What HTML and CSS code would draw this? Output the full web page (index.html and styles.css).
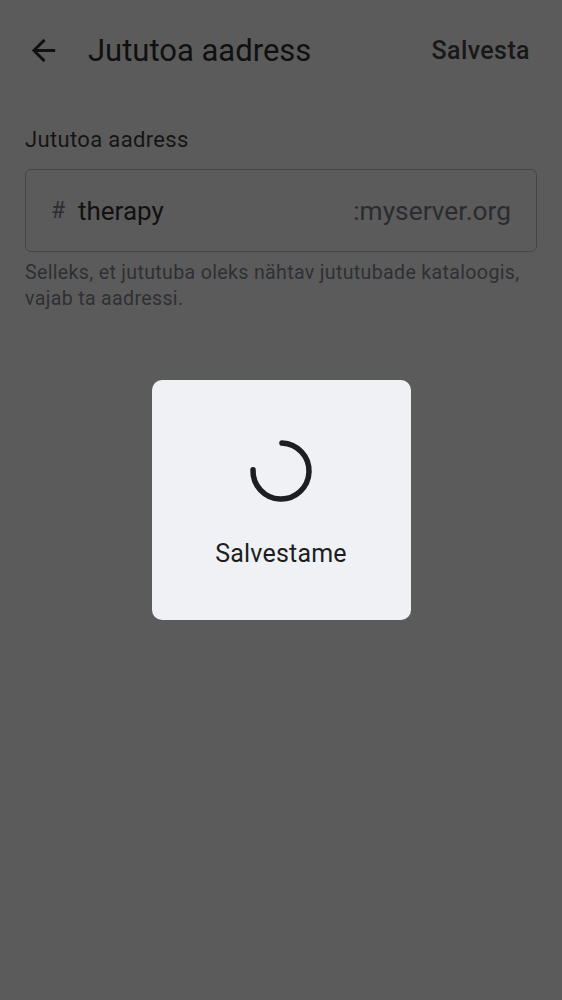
FILE: index.html
```html
<!DOCTYPE html>
<html lang="et">
<head>
<meta charset="utf-8">
<title>Jututoa aadress</title>
<link rel="stylesheet" href="styles.css">
</head>
<body>
<div class="page">
  <header class="topbar">
    <button class="back" aria-label="Tagasi">
      <svg width="35" height="35" viewBox="0 0 24 24"><path d="M20 11H7.83l5.59-5.59L12 4l-8 8 8 8 1.41-1.41L7.83 13H20v-2z" fill="currentColor"/></svg>
    </button>
    <h1 class="title">Jututoa aadress</h1>
    <span class="action">Salvesta</span>
  </header>
  <main class="content">
    <label class="label">Jututoa aadress</label>
    <div class="field">
      <span class="hash">#</span>
      <span class="value">therapy</span>
      <span class="server">:myserver.org</span>
    </div>
    <p class="help">Selleks, et jututuba oleks nähtav jututubade kataloogis, vajab ta aadressi.</p>
  </main>
</div>
<div class="scrim">
  <div class="dialog">
    <svg class="spinner" width="64" height="64" viewBox="0 0 64 64">
      <circle cx="32" cy="32" r="28" fill="none" stroke="#1d1e21" stroke-width="5.5" stroke-linecap="round" stroke-dasharray="131.9 200" transform="rotate(-88 32 32)"/>
    </svg>
    <div class="dialog-text">Salvestame</div>
  </div>
</div>
</body>
</html>
```

FILE: styles.css
```css
html, body {
  margin: 0;
  padding: 0;
  height: 100%;
}
body {
  background: #5b5b5b;
  font-family: Roboto, "Noto Sans", sans-serif;
  color: #121212;
}
.page {
  min-height: 100%;
}
.topbar {
  display: flex;
  align-items: center;
  height: 100px;
  padding: 0 32px 0 26px;
  box-sizing: border-box;
}
.back {
  display: flex;
  align-items: center;
  justify-content: center;
  background: none;
  border: 0;
  padding: 0;
  width: 35px;
  height: 35px;
  color: #111;
  margin-right: 27px;
}
.title {
  flex: 1;
  margin: 0;
  font-size: 31px;
  font-weight: 400;
  color: #101010;
}
.action {
  font-size: 25px;
  font-weight: 500;
  color: #181818;
  letter-spacing: 0.4px;
}
.content {
  padding: 24px 25px 0;
}
.label {
  display: block;
  font-size: 22px;
  color: #151515;
  line-height: 32px;
  letter-spacing: 0.35px;
  margin-bottom: 13px;
}
.field {
  display: flex;
  align-items: center;
  height: 83px;
  box-sizing: border-box;
  border: 1px solid #44454a;
  border-radius: 6px;
  padding: 0 25px 0 25px;
}
.hash {
  font-size: 23px;
  color: #2c2d31;
  width: 27px;
}
.value {
  flex: 1;
  font-size: 26px;
  color: #111;
}
.server {
  font-size: 26.3px;
  color: #2b2c30;
}
.help {
  margin: 8px 0 0;
  font-size: 19.6px;
  line-height: 26px;
  letter-spacing: 0.33px;
  color: #2f3033;
}
.scrim {
  position: fixed;
  inset: 0;
  display: flex;
  align-items: center;
  justify-content: center;
}
.dialog {
  width: 259px;
  height: 240px;
  box-sizing: border-box;
  background: #f0f1f5;
  border-radius: 10px;
  display: flex;
  flex-direction: column;
  align-items: center;
  padding-top: 59px;
}
.spinner {
  display: block;
}
.dialog-text {
  margin-top: 36px;
  font-size: 25px;
  color: #1d1e21;
  letter-spacing: 0.2px;
}
```
